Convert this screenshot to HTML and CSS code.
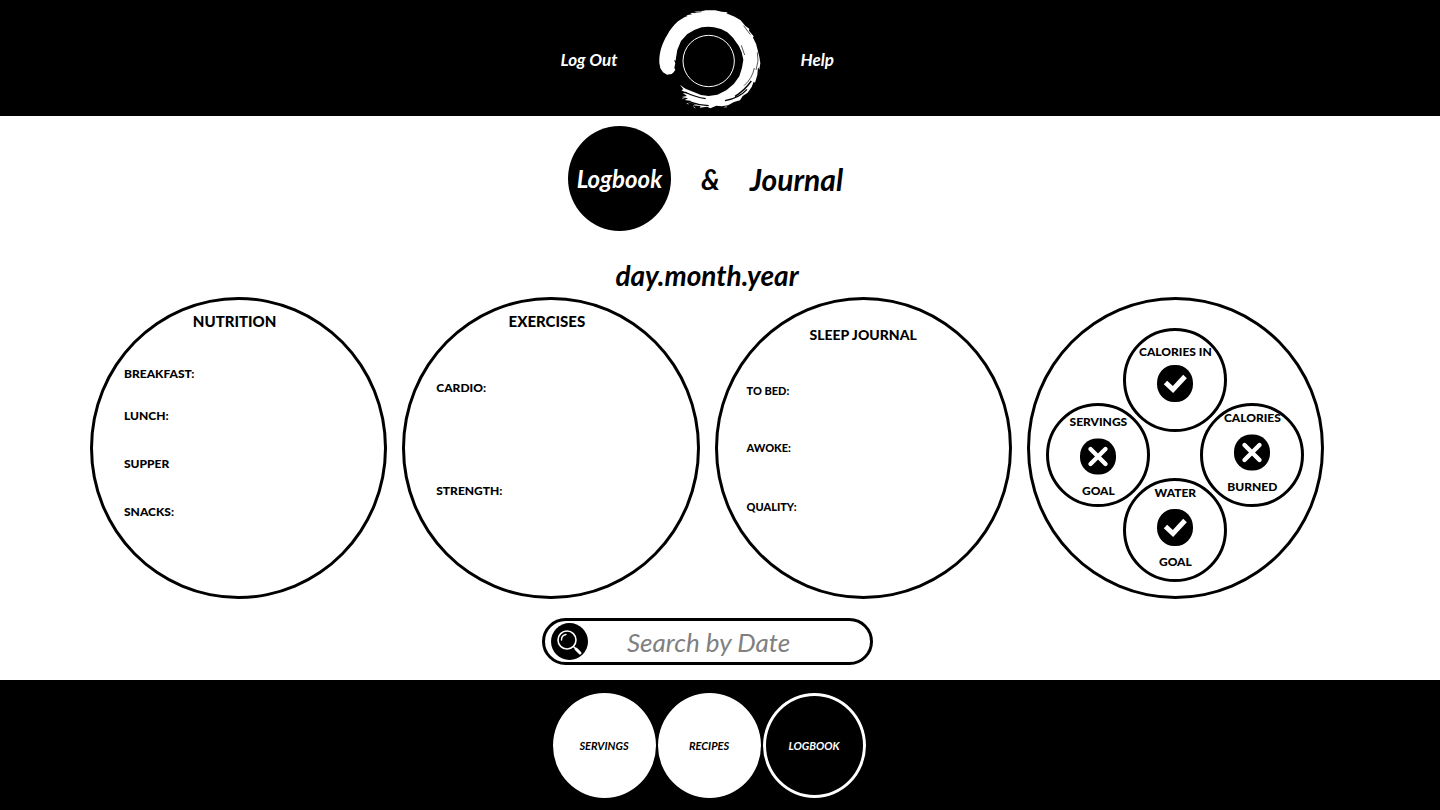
FILE: index.html
```html
<!DOCTYPE html>
<html lang="en">
<head>
<meta charset="utf-8">
<meta name="viewport" content="width=device-width, initial-scale=1">
<title>Logbook</title>
<link rel="stylesheet" href="styles.css">
</head>
<body>
<svg class="defs" width="0" height="0" aria-hidden="true">
  <symbol id="check" viewBox="0 0 36 37">
    <rect width="36" height="37" rx="17" ry="18"/>
    <path d="M8.500 17.500l7.500 7 12-13" fill="none" stroke="#fff" stroke-width="5"/>
  </symbol>
  <symbol id="cross" viewBox="0 0 36 36">
    <rect width="36" height="36" rx="17"/>
    <path d="M10.500 10.500l15 15M25.500 10.500l-15 15" fill="none" stroke="#fff" stroke-width="4.400" stroke-linecap="round"/>
  </symbol>
</svg>

<header class="site-header">
  <nav class="top-nav" aria-label="Account">
    <a class="top-link" href="#logout">Log Out</a>
    <a class="logo" href="#home" aria-label="Home">
      <svg class="logo-art" viewBox="50 25 315 306" aria-hidden="true">
        <path fill="#fff" d="M57 190C56 160 64 133 82 104C88 92 97 80 113 65L132 53L142 49L138 47L155 44L150 40L168 39L162 36L190 33L196 32H225L244 36L262 38L258 41L283 51L301 62L315 79L327 87L326 93L340 110L338 114L347 132L352 151L357 172L360 190L357 210L353 203L351 226L344 249L340 246L334 262L322 279L307 289L299 302L281 307L263 317L244 320L228 318L210 326L200 321L178 324L181 319L157 317L171 312L145 309L154 304L133 301L143 296L124 292L140 289L127 280L145 282L123 272L129 269L121 258L137 268L158 276L182 286L205 289L231 285L258 272L281 252L297 230L305 204L309 180L304 158L296 140L278 114L261 98L242 88L221 83L204 81L184 83L162 91L141 103L122 124L111 150L107 174L106 183L101 181L105 190L102 205L105 210L100 218L94 223L80 225L68 218L60 206Z"/>
        <path fill="none" stroke="#000" stroke-width="2" d="M303 137L313 166M351 158L353 184L347 211M342 205Q336 236 311 258M310 78L330 105M160 39L184 36"/>
        <path fill="none" stroke="#000" stroke-width="4" d="M333 244Q311 274 284 290M320 269Q297 295 254 303M205 318Q172 316 145 306M196 297Q166 293 133 277"/>
        <path fill="none" stroke="#fff" stroke-width="2" d="M121 257L127 263M139 311L145 313M252 323L260 321M159 321L165 325M126 297L133 294"/>
        <circle cx="205" cy="184" r="77" fill="none" stroke="#fff" stroke-width="3"/>
      </svg>
    </a>
    <a class="top-link" href="#help">Help</a>
  </nav>
</header>

<main class="content">
  <h1 class="tabs">
    <a class="tab tab-active" href="#logbook">Logbook</a>
    <span class="joiner">&amp;</span>
    <a class="tab" href="#journal">Journal</a>
  </h1>
  <p class="date">day.month.year</p>

  <div class="panels">
    <section class="panel nutrition">
      <h2 class="panel-title">NUTRITION</h2>
      <div class="entries">
        <p>BREAKFAST:</p>
        <p>LUNCH:</p>
        <p>SUPPER</p>
        <p>SNACKS:</p>
      </div>
    </section>
    <section class="panel exercises">
      <h2 class="panel-title">EXERCISES</h2>
      <div class="entries">
        <p>CARDIO:</p>
        <p>STRENGTH:</p>
      </div>
    </section>
    <section class="panel sleep">
      <h2 class="panel-title">SLEEP JOURNAL</h2>
      <div class="entries">
        <p>TO BED:</p>
        <p>AWOKE:</p>
        <p>QUALITY:</p>
      </div>
    </section>
    <section class="panel goals" aria-label="Daily goals">
      <div class="goal-ring">
        <div class="goal goal-top">
          <span>CALORIES IN</span>
          <svg class="mark" role="img" aria-label="Met"><use href="#check"/></svg>
        </div>
        <div class="goal goal-left">
          <span>SERVINGS</span>
          <svg class="mark" role="img" aria-label="Not met"><use href="#cross"/></svg>
          <span>GOAL</span>
        </div>
        <div class="goal goal-right">
          <span>CALORIES</span>
          <svg class="mark" role="img" aria-label="Not met"><use href="#cross"/></svg>
          <span>BURNED</span>
        </div>
        <div class="goal goal-bottom">
          <span>WATER</span>
          <svg class="mark" role="img" aria-label="Met"><use href="#check"/></svg>
          <span>GOAL</span>
        </div>
      </div>
    </section>
  </div>

  <form class="search" role="search">
    <button class="search-button" type="submit" aria-label="Search">
      <svg class="search-icon" viewBox="0 0 37 37" aria-hidden="true">
        <circle cx="18.500" cy="18.500" r="18.500"/>
        <g fill="none" stroke="#fff" stroke-linecap="round">
          <circle cx="16" cy="17" r="9" stroke-width="1.600"/>
          <path d="M10.500 17a5.500 5.500 0 0 1 4.500-5.500" stroke-width="1.400"/>
          <path d="M22.500 23.500l2 2" stroke-width="1.500"/>
          <path d="M25 26l4 4" stroke-width="3"/>
        </g>
      </svg>
    </button>
    <input class="search-input" type="text" placeholder="Search by Date" aria-label="Search by Date">
  </form>
</main>

<footer class="site-footer">
  <nav class="bottom-nav" aria-label="Sections">
    <a class="round-link" href="#servings">SERVINGS</a>
    <a class="round-link" href="#recipes">RECIPES</a>
    <a class="round-link current" href="#logbook" aria-current="page">LOGBOOK</a>
  </nav>
</footer>
</body>
</html>
```
FILE: styles.css
```css
* {
  box-sizing: border-box;
}

body {
  margin: 0;
  min-height: 100vh;
  display: flex;
  flex-direction: column;
  background: #fff;
  color: #000;
  font-family: Lato, "Liberation Sans", sans-serif;
}

a {
  color: inherit;
  text-decoration: none;
}

h1, h2, p {
  margin: 0;
}

.defs {
  position: absolute;
}

.site-header,
.site-footer {
  background: #000;
  color: #fff;
  padding-right: 22px;
}

.top-nav {
  display: grid;
  grid-template-columns: 1fr auto 1fr;
  align-items: center;
  column-gap: 39px;
  padding: 8px 0 6px;
}

.top-link {
  font-size: 17px;
  font-style: italic;
  font-weight: 700;
}

.top-link:first-child {
  justify-self: end;
}

.logo-art {
  display: block;
  width: 105px;
  height: 102px;
}

.content {
  flex: 1;
  display: flex;
  flex-direction: column;
  align-items: center;
  padding: 10px 116px 15px 90px;
}

.tabs {
  display: flex;
  align-items: center;
  gap: 30px;
  padding-right: 3px;
  font-size: 30px;
  font-style: italic;
  font-weight: 700;
}

.joiner {
  font-size: 28px;
}

.tab-active {
  display: grid;
  place-items: center;
  width: 103px;
  height: 105px;
  border-radius: 50%;
  background: #000;
  color: #fff;
  font-size: 24px;
}

.date {
  margin-top: 22px;
  font-size: 28px;
  line-height: 44px;
  font-style: italic;
  font-weight: 700;
}

.panels {
  align-self: stretch;
  display: grid;
  grid-template-columns: repeat(4, 1fr);
  gap: 15px;
}

.panel {
  aspect-ratio: 297 / 302;
  border: 3px solid #000;
  border-radius: 50%;
}

.panel-title {
  font-size: 15px;
  line-height: 24px;
  font-weight: 900;
  text-align: center;
}

.entries {
  display: grid;
  padding-left: 31px;
  font-size: 12px;
  line-height: 16px;
  font-weight: 900;
}

.nutrition {
  padding-top: 9px;
}

.nutrition .panel-title {
  padding-right: 8px;
}

.nutrition .entries {
  padding-top: 33px;
  grid-template-rows: 42px 48px 48px 16px;
}

.exercises {
  padding-top: 9px;
}

.exercises .panel-title {
  padding-right: 8px;
}

.exercises .entries {
  padding-top: 47px;
  grid-template-rows: 103px 16px;
}

.sleep {
  padding-top: 23px;
}

.sleep .panel-title {
  font-size: 14px;
}

.sleep .entries {
  padding-top: 36px;
  padding-left: 29px;
  font-size: 11px;
  grid-template-rows: 57px 59px 16px;
}

.goals {
  display: grid;
  place-items: center;
  padding-top: 13px;
}

.goal-ring {
  display: grid;
  width: 258px;
  height: 254px;
}

.goal {
  grid-area: 1 / 1;
  display: flex;
  flex-direction: column;
  align-items: center;
  gap: 8px;
  width: 104px;
  height: 104px;
  padding-top: 4px;
  border: 3px solid #000;
  border-radius: 50%;
  font-size: 12px;
  line-height: 16px;
  font-weight: 900;
}

.goal-top {
  place-self: start center;
  gap: 5px;
  padding-top: 13px;
}

.goal-left {
  place-self: center start;
  padding-top: 8px;
}

.goal-right {
  place-self: center end;
}

.goal-bottom {
  place-self: end center;
}

.mark {
  flex: none;
  width: 36px;
  height: 37px;
}

.search {
  display: flex;
  align-items: center;
  width: 331px;
  max-width: 100%;
  height: 47px;
  margin-top: 19px;
  padding: 0 6px;
  border: 3px solid #000;
  border-radius: 24px;
}

.search-button {
  flex: none;
  padding: 0;
  border: 0;
  background: none;
}

.search-icon {
  display: block;
  width: 37px;
  height: 37px;
}

.search-input {
  flex: 1;
  min-width: 0;
  height: 41px;
  padding: 0 34px 0 0;
  border: 0;
  outline: 0;
  background: none;
  font: italic 400 26px Lato, "Liberation Sans", sans-serif;
  text-align: center;
}

.search-input::placeholder {
  color: #808080;
}

.bottom-nav {
  display: flex;
  justify-content: center;
  gap: 2px;
  padding: 13px 0 12px;
}

.round-link {
  display: grid;
  place-items: center;
  width: 103px;
  height: 105px;
  border: 3px solid #fff;
  border-radius: 50%;
  background: #fff;
  color: #000;
  font-size: 11px;
  font-style: italic;
  font-weight: 700;
}

.round-link.current {
  background: #000;
  color: #fff;
}
```
